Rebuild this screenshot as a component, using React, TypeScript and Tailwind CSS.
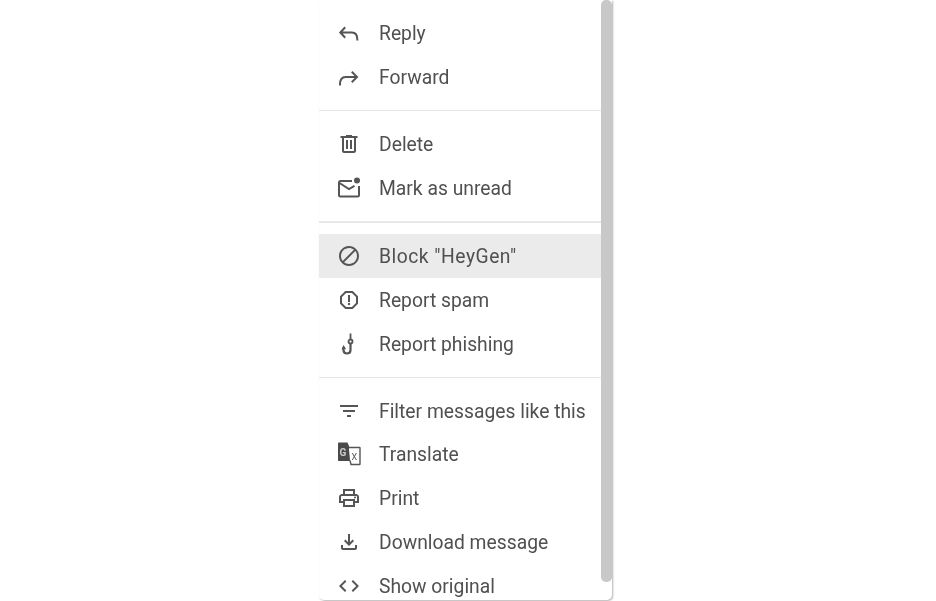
import type { ReactNode } from "react";

const Icon = ({ children }: { children: ReactNode }) => (
  <svg width="24" height="24" viewBox="0 0 24 24" fill="#555" className="shrink-0">
    {children}
  </svg>
);

const stroke = { fill: "none", stroke: "#555", strokeWidth: 2, strokeLinecap: "square" as const };

const icons: Record<string, ReactNode> = {
  reply: <path {...stroke} d="M7.5 7 3.3 11.5 7.5 16M4.5 11.5H15C18.5 11.5 20.3 14 20.3 18.5" />,
  forward: <path {...stroke} d="M15.5 7.5 20 12 15.5 16.5M19 12H8.5C5 12 3 14.5 3 19.5" />,
  trash: <path d="M15 4V3H9v1H3.5v2H5v13c0 1.1.9 2 2 2h10c1.1 0 2-.9 2-2V6h1.5V4H15zm2 15H7V6h10v13zM9 8h2v9H9zm4 0h2v9h-2z" />,
  unread: (
    <>
      <path {...stroke} strokeLinecap="butt" d="M15 6H3.5C2.7 6 2 6.7 2 7.5V20c0 .8.7 1.5 1.5 1.5h17c.8 0 1.5-.7 1.5-1.5v-9" transform="translate(0 -1)" />
      <path {...stroke} strokeLinecap="butt" d="M2.5 7 12 13l5.5-3.2" />
      <circle cx="20" cy="4.5" r="3" />
    </>
  ),
  block: <path d="M12 2C6.48 2 2 6.48 2 12s4.48 10 10 10 10-4.48 10-10S17.52 2 12 2zM4 12c0-4.42 3.58-8 8-8 1.85 0 3.55.63 4.9 1.69L5.69 16.9C4.63 15.55 4 13.85 4 12zm8 8c-1.85 0-3.55-.63-4.9-1.69L18.31 7.1C19.37 8.45 20 10.15 20 12c0 4.42-3.58 8-8 8z" />,
  spam: (
    <>
      <path d="M15.73 3H8.27L3 8.27v7.46L8.27 21h7.46L21 15.73V8.27L15.73 3zM19 14.9L14.9 19H9.1L5 14.9V9.1L9.1 5h5.8L19 9.1v5.8z" />
      <circle cx="12" cy="16" r="1.2" />
      <rect x="11" y="7" width="2" height="7" />
    </>
  ),
  phishing: (
    <>
      <path {...stroke} strokeLinecap="butt" strokeWidth="2.2" d="M13.5 12V18c0 2.2-1.5 3.5-3.5 3.5s-3.5-1.4-3.5-3.5v-3" />
      <circle cx="13.5" cy="9.5" r="2" fill="none" stroke="#555" strokeWidth="1.8" />
      <path {...stroke} strokeLinecap="butt" d="M13.5 7.5V1.5" strokeWidth="1.8" />
      <path d="M4.5 17.5 6.5 13l2.5 4z" />
    </>
  ),
  filter: <path d="M10 18h4v-2h-4v2zM3 6v2h18V6H3zm3 7h12v-2H6v2z" />,
  translate: (
    <>
      <path d="M1 1.5C1 1 1.5.5 2 .5h8.5L12 4l1.5 15H2c-.5 0-1-.5-1-1z" fill="#4a4a4a" />
      <path d="M12 5.5h10.5c.3 0 .5.2.5.5v16c0 .3-.2.5-.5.5H14l-1-4" fill="#fff" stroke="#555" strokeWidth="1.4" />
      <text x="2.6" y="13.5" fontSize="10" fontWeight="700" fill="#ccc" fontFamily="Roboto, sans-serif">G</text>
      <text x="14.5" y="17.5" fontSize="9" fill="#555" fontFamily="Roboto, sans-serif">X</text>
    </>
  ),
  print: (
    <>
      <path d="M19 8h-1V3H6v5H5c-1.66 0-3 1.34-3 3v6h4v4h12v-4h4v-6c0-1.66-1.34-3-3-3zM8 5h8v3H8V5zm8 12v2H8v-4h8v2zm2-2v-2H6v2H4v-4c0-.55.45-1 1-1h14c.55 0 1 .45 1 1v4h-2z" />
      <circle cx="18" cy="11.5" r="1" />
    </>
  ),
  download: <path d="M18 15v3H6v-3H4v3c0 1.1.9 2 2 2h12c1.1 0 2-.9 2-2v-3h-2zm-1-4l-1.41-1.41L13 12.17V4h-2v8.17L8.41 9.59 7 11l5 5 5-5z" />,
  code: <path d="M9.4 16.6L4.8 12l4.6-4.6L8 6l-6 6 6 6 1.4-1.4zm5.2 0l4.6-4.6-4.6-4.6L16 6l6 6-6 6-1.4-1.4z" />,
};

type Item = { icon: string; label: string; active?: boolean; short?: boolean };

const groups: Item[][] = [
  [
    { icon: "reply", label: "Reply" },
    { icon: "forward", label: "Forward" },
  ],
  [
    { icon: "trash", label: "Delete" },
    { icon: "unread", label: "Mark as unread" },
  ],
  [
    { icon: "block", label: 'Block "HeyGen"', active: true },
    { icon: "spam", label: "Report spam" },
    { icon: "phishing", label: "Report phishing" },
  ],
  [
    { icon: "filter", label: "Filter messages like this", short: true },
    { icon: "translate", label: "Translate" },
    { icon: "print", label: "Print" },
    { icon: "download", label: "Download message" },
    { icon: "code", label: "Show original" },
  ],
];

export default function App() {
  return (
    <div className="h-[601px] overflow-hidden bg-white pl-[319px] font-['Roboto',sans-serif]">
      <div className="flex h-[600px] w-[293px] overflow-hidden rounded-b-[5px] bg-white shadow-[1px_1px_2px_rgba(0,0,0,0.3)]">
        <div className="w-[282px] shrink-0 pt-[11px] blur-[0.6px]">
          {groups.map((items, i) => (
            <div key={i}>
              {i > 0 && (
                <div className={`mb-[11px] mt-[11px] ${i === 2 ? "h-[2px] bg-[#e8e8e8]" : "h-px bg-[#e6e6e6]"}`} />
              )}
              {items.map((item) => (
                <div
                  key={item.label}
                  className={`flex items-center gap-[18px] pl-[18px] text-[19.3px] leading-none text-[#505050] ${
                    item.short ? "h-[43px]" : "h-[44px]"
                  } ${item.active ? "bg-[#ebebeb] tracking-[0.5px]" : ""}`}
                >
                  <Icon>{icons[item.icon]}</Icon>
                  <span className="mt-[2px] whitespace-nowrap">{item.label}</span>
                </div>
              ))}
            </div>
          ))}
        </div>
        <div className="w-[11px] shrink-0">
          <div className="h-[582px] w-[11px] rounded-[5px] bg-[#c8c8c8]" />
        </div>
      </div>
    </div>
  );
}
